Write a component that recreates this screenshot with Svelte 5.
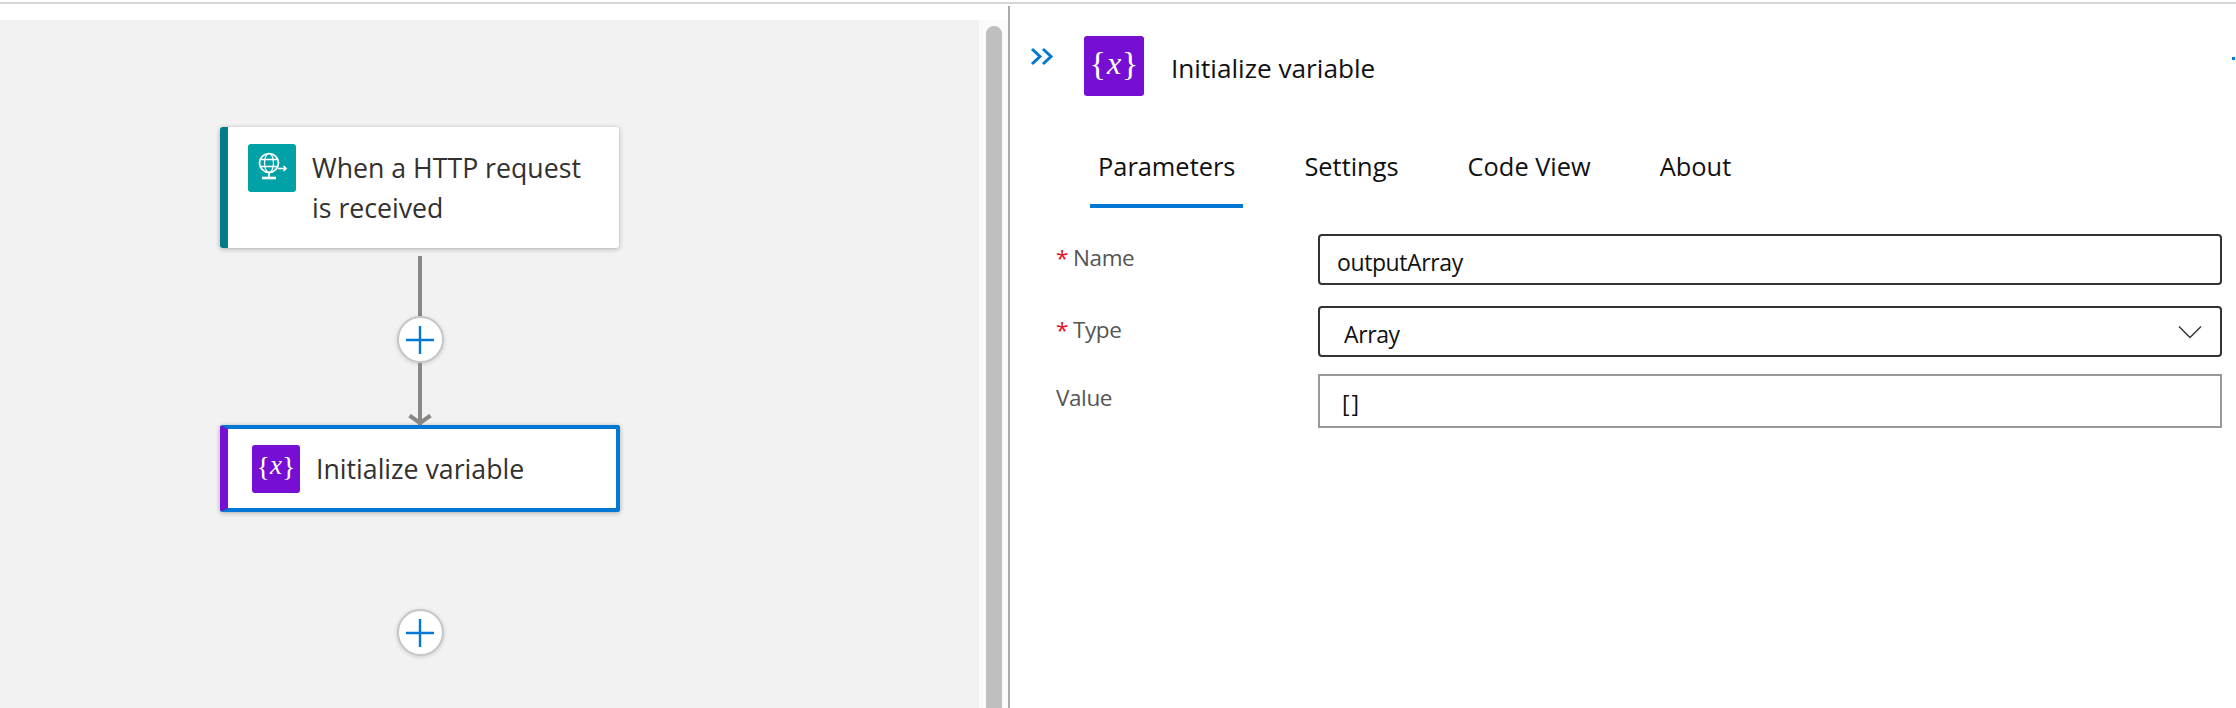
<script lang="ts">
  const tabs = ["Parameters", "Settings", "Code View", "About"];
  let active = $state("Parameters");
</script>

{#snippet addButton()}
  <button class="add" aria-label="Add step">
    <svg width="28" height="28" viewBox="0 0 28 28">
      <path d="M0 14h28M14 0v28" stroke="#0078d4" stroke-width="2.4" fill="none" />
    </svg>
  </button>
{/snippet}

<div class="page">
  <div class="topline"></div>
  <div class="main">
    <div class="canvas-wrap">
      <div class="canvas">
        <div class="flow">
          <div class="card trigger">
            <div class="icon teal">
              <svg width="30" height="32" viewBox="0 0 30 32" fill="none" stroke="#fff" stroke-width="1.3">
                <circle cx="11" cy="11" r="9.5" stroke-width="1.7" />
                <ellipse cx="11" cy="11" rx="4.5" ry="9.5" />
                <path d="M2 7.5h18M2 14.5h18" />
                <path d="M11 21v4" stroke-width="1.7" />
                <path d="M4 26h14" stroke-width="2.6" />
                <path d="M20 16.5h8M25.5 14l2.7 2.5-2.7 2.5" stroke-width="1.4" />
              </svg>
            </div>
            <div class="card-title two">When a HTTP request<br />is received</div>
          </div>
          <div class="line first"></div>
          {@render addButton()}
          <div class="line second"></div>
          <svg class="arrow" width="24" height="12" viewBox="0 0 24 12">
            <path d="M1.5 1.5 12 9 22.5 1.5" stroke="#8a8886" stroke-width="4" fill="none" />
          </svg>
          <div class="card action">
            <div class="icon purple small"><span class="brace">&#123;</span><span class="ex">x</span><span class="brace">&#125;</span></div>
            <div class="card-title">Initialize variable</div>
          </div>
          <div class="gap"></div>
          {@render addButton()}
        </div>
      </div>
      <div class="scroll-track"><div class="scroll-thumb"></div></div>
    </div>

    <div class="divider"></div>

    <div class="panel">
      <div class="panel-head">
        <svg class="collapse" width="24" height="19" viewBox="0 0 24 19" fill="none" stroke="#0078d4" stroke-width="3">
          <path d="M2 2l8 7.5L2 17M13 2l8 7.5L13 17" />
        </svg>
        <div class="icon purple big"><span class="brace">&#123;</span><span class="ex">x</span><span class="brace">&#125;</span></div>
        <div class="panel-title">Initialize variable</div>
      </div>

      <div class="tabs">
        {#each tabs as t}
          <button class="tab" class:active={t === active} onclick={() => (active = t)}>{t}</button>
        {/each}
      </div>

      <div class="form">
        <div class="row name">
          <div class="label"><span class="req">*</span>Name</div>
          <div class="field strong"><span class="val">outputArray</span></div>
        </div>
        <div class="row type">
          <div class="label"><span class="req">*</span>Type</div>
          <div class="field strong select">
            <span class="val">Array</span>
            <svg width="24" height="14" viewBox="0 0 24 14" fill="none" stroke="#333" stroke-width="1.4">
              <path d="M1 1.5 12 12.5 23 1.5" />
            </svg>
          </div>
        </div>
        <div class="row value">
          <div class="label">Value</div>
          <div class="field plain"><span class="val brackets">[]</span></div>
        </div>
      </div>

      <div class="clip-dot"></div>
    </div>
  </div>
</div>

<style>
  :global(body) {
    margin: 0;
    background: #fff;
  }
  .page {
    width: 2236px;
    height: 708px;
    overflow: hidden;
    font-family: "Open Sans", "Noto Sans", sans-serif;
    color: #323130;
    display: flex;
    flex-direction: column;
  }
  .topline {
    height: 2px;
    margin-top: 2px;
    background: #d6d6d6;
    flex: none;
  }
  .main {
    flex: 1;
    display: flex;
    min-height: 0;
  }
  .canvas-wrap {
    width: 1008px;
    flex: none;
    display: flex;
    padding-top: 16px;
    box-sizing: border-box;
  }
  .canvas {
    width: 979px;
    flex: none;
    background: #f2f2f2;
  }
  .flow {
    width: 400px;
    margin-left: 220px;
    padding-top: 107px;
    display: flex;
    flex-direction: column;
    align-items: center;
  }
  .card {
    box-sizing: border-box;
    width: 100%;
    background: #fff;
    display: flex;
    border-radius: 3px;
    box-shadow: 0 1px 5px rgba(0, 0, 0, 0.3);
  }
  .trigger {
    width: 399px;
    align-self: flex-start;
    height: 121px;
    border-left: 8px solid #007c89;
    padding: 17px 0 0 20px;
    gap: 16px;
  }
  .action {
    height: 87px;
    border: 4px solid #0078d4;
    border-left: 8px solid #760fd3;
    padding-left: 24px;
    align-items: center;
    gap: 16px;
  }
  .icon {
    flex: none;
    width: 48px;
    height: 48px;
    border-radius: 3px;
    display: flex;
    align-items: center;
    justify-content: center;
    box-sizing: border-box;
  }
  .teal {
    background: #00a1a7;
    padding-left: 2px;
  }
  .purple {
    background: #760fd3;
    color: #fff;
    font-family: "Liberation Serif", serif;
    gap: 0;
  }
  .big {
    width: 60px;
    height: 60px;
    gap: 1px;
  }
  .brace {
    font-size: 28px;
    font-weight: 400;
    line-height: 1;
    margin-top: -4px;
  }
  .ex {
    font-style: italic;
    font-size: 27px;
    line-height: 1;
    margin-top: -6px;
  }
  .big .brace {
    font-size: 34px;
  }
  .big .ex {
    font-size: 32px;
  }
  .card-title {
    font-size: 26.7px;
    line-height: 40px;
    color: #323130;
  }
  .card-title.two {
    margin-top: 4px;
  }
  .line {
    width: 4px;
    background: #8a8886;
    flex: none;
  }
  .line.first {
    margin-top: 8px;
    height: 60px;
  }
  .line.second {
    height: 62px;
  }
  .arrow {
    margin-top: -11px;
    margin-bottom: -1px;
    flex: none;
    position: relative;
  }
  .add {
    flex: none;
    width: 47px;
    height: 47px;
    padding: 0;
    border-radius: 50%;
    border: 2px solid #c8c6c4;
    background: #fff;
    box-shadow: 0 1px 4px rgba(0, 0, 0, 0.16);
    display: flex;
    align-items: center;
    justify-content: center;
  }
  .gap {
    height: 97px;
  }
  .scroll-track {
    width: 29px;
    background: #fafafa;
    padding: 6px 0 0 7px;
    box-sizing: border-box;
  }
  .scroll-thumb {
    width: 16px;
    height: 100%;
    background: #bebebe;
    border-radius: 8px 8px 0 0;
  }
  .divider {
    width: 2px;
    flex: none;
    background: #aaa;
    margin-top: 2px;
  }
  .panel {
    flex: 1;
    position: relative;
    min-width: 0;
  }
  .panel-head {
    display: flex;
    align-items: center;
    height: 60px;
    margin-top: 32px;
    padding-left: 20px;
  }
  .collapse {
    margin-bottom: 19px;
  }
  .panel-head .icon {
    margin-left: 30px;
  }
  .panel-title {
    margin-left: 27px;
    margin-top: 3px;
    font-size: 26.2px;
    color: #111;
  }
  .tabs {
    display: flex;
    margin-top: 49px;
    padding-left: 80px;
    gap: 53px;
  }
  .tab {
    font: inherit;
    font-size: 25.4px;
    color: #111;
    background: none;
    border: none;
    padding: 0 8px 16px;
    height: 43px;
    line-height: 43px;
    border-bottom: 4px solid transparent;
    box-sizing: content-box;
  }
  .tab.active {
    border-bottom-color: #0078d4;
  }
  .form {
    margin-top: 26px;
    padding-right: 14px;
  }
  .row {
    display: flex;
  }
  .row.type {
    margin-top: 21px;
  }
  .row.value {
    margin-top: 17px;
  }
  .label {
    width: 308px;
    padding-left: 46px;
    box-sizing: border-box;
    font-size: 22.5px;
    letter-spacing: -0.4px;
    color: #555;
    line-height: 34px;
    margin-top: 7px;
    flex: none;
  }
  .req {
    color: #e81123;
    margin-right: 5px;
  }
  .field {
    flex: 1;
    box-sizing: border-box;
    font-size: 23px;
    letter-spacing: -0.4px;
    color: #111;
    display: flex;
    align-items: center;
    background: #fff;
  }
  .val {
    margin-top: 4px;
  }
  .brackets {
    letter-spacing: 2px;
  }
  .strong {
    height: 51px;
    border: 2px solid #333;
    border-radius: 4px;
    padding-left: 17px;
  }
  .select {
    justify-content: space-between;
    padding-left: 24px;
    padding-right: 18px;
  }
  .plain {
    height: 54px;
    border: 2px solid #999;
    padding-left: 22px;
  }
  .clip-dot {
    position: absolute;
    right: 1px;
    top: 53px;
    width: 3px;
    height: 3px;
    background: #0078d4;
  }
</style>
